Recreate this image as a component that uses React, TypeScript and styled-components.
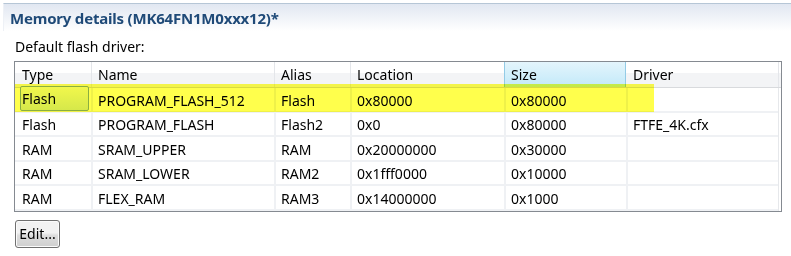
import React from 'react';
import styled, { createGlobalStyle } from 'styled-components';

const GlobalStyle = createGlobalStyle`
  body {
    margin: 0;
    background: #ffffff;
    font-family: 'Noto Sans', 'Open Sans', sans-serif;
    color: #000;
  }
`;

const Page = styled.div`
  width: 791px;
  height: 256px;
  overflow: hidden;
  background: #fff;
`;

const TitleBar = styled.div`
  margin: 3px 0 0 3px;
  height: 27px;
  border-top: 1px solid #b6c6d6;
  border-left: 1px solid #eef1f6;
  background: linear-gradient(#e1e7f1, #ffffff);
  display: flex;
  align-items: center;
  padding-left: 6px;
`;

const Title = styled.span`
  font-size: 15px;
  font-weight: bold;
  color: #1f4a78;
  letter-spacing: -0.2px;
`;

const Content = styled.div`
  padding: 7px 0 0 14px;
  display: flex;
  flex-direction: column;
  align-items: flex-start;
`;

const Label = styled.div`
  font-size: 14px;
  line-height: 18px;
  padding-left: 1px;
  margin-bottom: 5px;
`;

const TableBox = styled.div`
  position: relative;
  width: 768px;
  box-sizing: border-box;
  border: 1px solid #858a91;
  font-size: 14px;
`;

const COLS = '76px 183px 76px 154px 122px 152px 1fr';

const HeaderRow = styled.div`
  display: grid;
  grid-template-columns: ${COLS};
  height: 26px;
  border-bottom: 1px solid #d8dadd;
  box-sizing: border-box;
  background: linear-gradient(#ffffff 0 42%, #f3f4f6 42% 100%);
`;

const HeaderCell = styled.div<{ $active?: boolean; $afterActive?: boolean }>`
  box-sizing: border-box;
  display: flex;
  align-items: center;
  padding-left: 6px;
  border-left: 1px solid ${p => (p.$active ? '#93cbe6' : p.$afterActive ? 'transparent' : '#e4e6ea')};
  border-right: ${p => (p.$active ? '1px solid #93cbe6' : 'none')};
  background: ${p => (p.$active ? 'linear-gradient(#e4f5fc, #c2e9f9)' : 'transparent')};

  &:first-child {
    border-left: none;
    padding-left: 7px;
  }
`;

const Row = styled.div`
  display: grid;
  grid-template-columns: ${COLS};
  height: 24.5px;
`;

const Cell = styled.div`
  box-sizing: border-box;
  display: flex;
  align-items: center;
  padding: 2px 0 0 5px;
  border-left: 2px solid #eff1f4;
  border-bottom: 2px solid #eff1f4;
  white-space: nowrap;

  &:first-child {
    border-left: none;
    padding-left: 7px;
  }

  &:last-child {
    border-left: 1px solid #e6e8eb;
    border-bottom: none;
    padding: 0;
  }
`;

const SelectedCell = styled(Cell)`
  &:first-child {
    padding: 0 2px 0 5px;
    align-items: stretch;
  }
`;

const SelBox = styled.div`
  flex: 1;
  display: flex;
  align-items: center;
  margin: -2px 0 0;
  padding: 1px 0 0 1px;
  border: 1px solid #8aaed8;
  border-radius: 2px;
  background: linear-gradient(#f1f7fd, #d6e8f9);
`;

const Highlight = styled.div`
  position: absolute;
  left: 0;
  top: 22px;
  width: 639px;
  height: 28px;
  background: #ffff4c;
  mix-blend-mode: multiply;
  pointer-events: none;
`;

const EditButton = styled.button`
  margin: 8px 0 0 1px;
  width: 45px;
  height: 28px;
  padding: 0;
  font-family: 'Noto Sans', 'Open Sans', sans-serif;
  font-size: 14px;
  color: #000;
  border: 1px solid #707070;
  border-radius: 3px;
  background: linear-gradient(#f2f2f2 0 45%, #dddddd 55%, #cfcfcf 100%);
  box-shadow: inset 0 0 0 1px #fbfbfb;
`;

type Region = {
  type: string;
  name: string;
  alias: string;
  location: string;
  size: string;
  driver: string;
};

const regions: Region[] = [
  { type: 'Flash', name: 'PROGRAM_FLASH_512', alias: 'Flash', location: '0x80000', size: '0x80000', driver: '' },
  { type: 'Flash', name: 'PROGRAM_FLASH', alias: 'Flash2', location: '0x0', size: '0x80000', driver: 'FTFE_4K.cfx' },
  { type: 'RAM', name: 'SRAM_UPPER', alias: 'RAM', location: '0x20000000', size: '0x30000', driver: '' },
  { type: 'RAM', name: 'SRAM_LOWER', alias: 'RAM2', location: '0x1fff0000', size: '0x10000', driver: '' },
  { type: 'RAM', name: 'FLEX_RAM', alias: 'RAM3', location: '0x14000000', size: '0x1000', driver: '' },
];

const headers = ['Type', 'Name', 'Alias', 'Location', 'Size', 'Driver'];

const App: React.FC = () => {
  return (
    <Page>
      <GlobalStyle />
      <TitleBar>
        <Title>Memory details (MK64FN1M0xxx12)*</Title>
      </TitleBar>
      <Content>
        <Label>Default flash driver:</Label>
        <TableBox>
          <HeaderRow>
            {headers.map(h => (
              <HeaderCell key={h} $active={h === 'Size'} $afterActive={h === 'Driver'}>
                {h}
              </HeaderCell>
            ))}
            <HeaderCell />
          </HeaderRow>
          {regions.map((r, i) =>
            i === 0 ? (
              <Row key={r.name}>
                <SelectedCell>
                  <SelBox>{r.type}</SelBox>
                </SelectedCell>
                <Cell>{r.name}</Cell>
                <Cell>{r.alias}</Cell>
                <Cell>{r.location}</Cell>
                <Cell>{r.size}</Cell>
                <Cell>{r.driver}</Cell>
                <Cell />
              </Row>
            ) : (
              <Row key={r.name}>
                <Cell>{r.type}</Cell>
                <Cell>{r.name}</Cell>
                <Cell>{r.alias}</Cell>
                <Cell>{r.location}</Cell>
                <Cell>{r.size}</Cell>
                <Cell>{r.driver}</Cell>
                <Cell />
              </Row>
            )
          )}
          <Highlight />
        </TableBox>
        <EditButton>Edit...</EditButton>
      </Content>
    </Page>
  );
};

export default App;
